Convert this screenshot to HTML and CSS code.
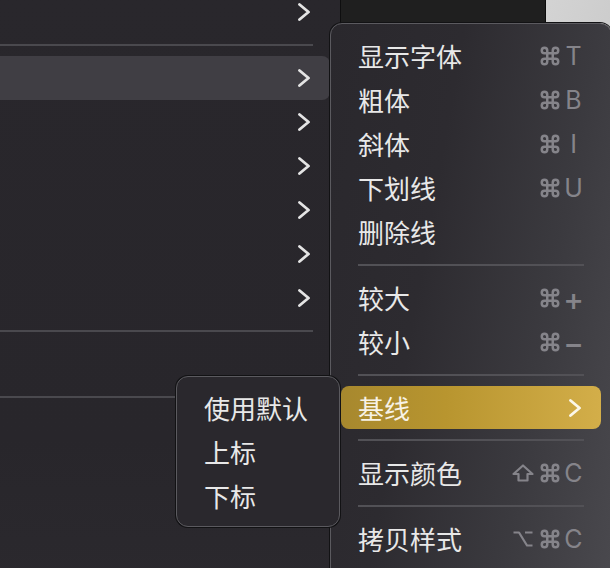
FILE: index.html
```html
<!DOCTYPE html>
<html lang="zh-CN">
<head>
<meta charset="utf-8">
<title>格式菜单</title>
<link rel="stylesheet" href="styles.css">
</head>
<body>
<div class="desktop">
  <div class="backwin"></div>

  <div class="menu menu-main">
    <div class="row"><span class="label"></span><svg class="chev" viewBox="0 0 14 18"><path d="M2.5 1.5 L11.5 9 L2.5 16.5"/></svg></div>
    <div class="sep"></div>
    <div class="row hover"><span class="label"></span><svg class="chev" viewBox="0 0 14 18"><path d="M2.5 1.5 L11.5 9 L2.5 16.5"/></svg></div>
    <div class="row"><span class="label"></span><svg class="chev" viewBox="0 0 14 18"><path d="M2.5 1.5 L11.5 9 L2.5 16.5"/></svg></div>
    <div class="row"><span class="label"></span><svg class="chev" viewBox="0 0 14 18"><path d="M2.5 1.5 L11.5 9 L2.5 16.5"/></svg></div>
    <div class="row"><span class="label"></span><svg class="chev" viewBox="0 0 14 18"><path d="M2.5 1.5 L11.5 9 L2.5 16.5"/></svg></div>
    <div class="row"><span class="label"></span><svg class="chev" viewBox="0 0 14 18"><path d="M2.5 1.5 L11.5 9 L2.5 16.5"/></svg></div>
    <div class="row"><span class="label"></span><svg class="chev" viewBox="0 0 14 18"><path d="M2.5 1.5 L11.5 9 L2.5 16.5"/></svg></div>
    <div class="sep"></div>
    <div class="row"><span class="label"></span></div>
    <div class="sep"></div>
    <div class="row"><span class="label"></span></div>
    <div class="row"><span class="label"></span></div>
    <div class="row"><span class="label"></span></div>
  </div>

  <div class="menu menu-format">
    <div class="row"><span class="label">显示字体</span><span class="keys"><svg class="cmd" viewBox="0 0 24 24"><path d="M18 3a3 3 0 0 0-3 3v12a3 3 0 0 0 3 3 3 3 0 0 0 3-3 3 3 0 0 0-3-3H6a3 3 0 0 0-3 3 3 3 0 0 0 3 3 3 3 0 0 0 3-3V6a3 3 0 0 0-3-3 3 3 0 0 0-3 3 3 3 0 0 0 3 3h12a3 3 0 0 0 3-3 3 3 0 0 0-3-3z"/></svg><span class="key">T</span></span></div>
    <div class="row"><span class="label">粗体</span><span class="keys"><svg class="cmd" viewBox="0 0 24 24"><path d="M18 3a3 3 0 0 0-3 3v12a3 3 0 0 0 3 3 3 3 0 0 0 3-3 3 3 0 0 0-3-3H6a3 3 0 0 0-3 3 3 3 0 0 0 3 3 3 3 0 0 0 3-3V6a3 3 0 0 0-3-3 3 3 0 0 0-3 3 3 3 0 0 0 3 3h12a3 3 0 0 0 3-3 3 3 0 0 0-3-3z"/></svg><span class="key">B</span></span></div>
    <div class="row"><span class="label">斜体</span><span class="keys"><svg class="cmd" viewBox="0 0 24 24"><path d="M18 3a3 3 0 0 0-3 3v12a3 3 0 0 0 3 3 3 3 0 0 0 3-3 3 3 0 0 0-3-3H6a3 3 0 0 0-3 3 3 3 0 0 0 3 3 3 3 0 0 0 3-3V6a3 3 0 0 0-3-3 3 3 0 0 0-3 3 3 3 0 0 0 3 3h12a3 3 0 0 0 3-3 3 3 0 0 0-3-3z"/></svg><span class="key">I</span></span></div>
    <div class="row"><span class="label">下划线</span><span class="keys"><svg class="cmd" viewBox="0 0 24 24"><path d="M18 3a3 3 0 0 0-3 3v12a3 3 0 0 0 3 3 3 3 0 0 0 3-3 3 3 0 0 0-3-3H6a3 3 0 0 0-3 3 3 3 0 0 0 3 3 3 3 0 0 0 3-3V6a3 3 0 0 0-3-3 3 3 0 0 0-3 3 3 3 0 0 0 3 3h12a3 3 0 0 0 3-3 3 3 0 0 0-3-3z"/></svg><span class="key">U</span></span></div>
    <div class="row"><span class="label">删除线</span></div>
    <div class="sep"></div>
    <div class="row"><span class="label">较大</span><span class="keys"><svg class="cmd" viewBox="0 0 24 24"><path d="M18 3a3 3 0 0 0-3 3v12a3 3 0 0 0 3 3 3 3 0 0 0 3-3 3 3 0 0 0-3-3H6a3 3 0 0 0-3 3 3 3 0 0 0 3 3 3 3 0 0 0 3-3V6a3 3 0 0 0-3-3 3 3 0 0 0-3 3 3 3 0 0 0 3 3h12a3 3 0 0 0 3-3 3 3 0 0 0-3-3z"/></svg><span class="key sym">+</span></span></div>
    <div class="row"><span class="label">较小</span><span class="keys"><svg class="cmd" viewBox="0 0 24 24"><path d="M18 3a3 3 0 0 0-3 3v12a3 3 0 0 0 3 3 3 3 0 0 0 3-3 3 3 0 0 0-3-3H6a3 3 0 0 0-3 3 3 3 0 0 0 3 3 3 3 0 0 0 3-3V6a3 3 0 0 0-3-3 3 3 0 0 0-3 3 3 3 0 0 0 3 3h12a3 3 0 0 0 3-3 3 3 0 0 0-3-3z"/></svg><span class="key sym">−</span></span></div>
    <div class="sep"></div>
    <div class="row selected"><span class="label">基线</span><svg class="chev" viewBox="0 0 14 18"><path d="M2.5 1.5 L11.5 9 L2.5 16.5"/></svg></div>
    <div class="sep"></div>
    <div class="row"><span class="label">显示颜色</span><span class="keys"><svg class="modsym" viewBox="0 0 22 18"><path d="M11 1.5 L20.5 10 H15.5 V16.5 H6.5 V10 H1.5 Z"/></svg><svg class="cmd" viewBox="0 0 24 24"><path d="M18 3a3 3 0 0 0-3 3v12a3 3 0 0 0 3 3 3 3 0 0 0 3-3 3 3 0 0 0-3-3H6a3 3 0 0 0-3 3 3 3 0 0 0 3 3 3 3 0 0 0 3-3V6a3 3 0 0 0-3-3 3 3 0 0 0-3 3 3 3 0 0 0 3 3h12a3 3 0 0 0 3-3 3 3 0 0 0-3-3z"/></svg><span class="key">C</span></span></div>
    <div class="sep"></div>
    <div class="row"><span class="label">拷贝样式</span><span class="keys"><svg class="modsym" viewBox="0 0 22 18"><path d="M1.5 2.5 H7 L15 15.5 H20.5 M13 2.5 H20.5"/></svg><svg class="cmd" viewBox="0 0 24 24"><path d="M18 3a3 3 0 0 0-3 3v12a3 3 0 0 0 3 3 3 3 0 0 0 3-3 3 3 0 0 0-3-3H6a3 3 0 0 0-3 3 3 3 0 0 0 3 3 3 3 0 0 0 3-3V6a3 3 0 0 0-3-3 3 3 0 0 0-3 3 3 3 0 0 0 3 3h12a3 3 0 0 0 3-3 3 3 0 0 0-3-3z"/></svg><span class="key">C</span></span></div>
  </div>

  <div class="menu menu-sub">
    <div class="row"><span class="label">使用默认</span></div>
    <div class="row"><span class="label">上标</span></div>
    <div class="row"><span class="label">下标</span></div>
  </div>
</div>
</body>
</html>
```
FILE: styles.css
```css
* { box-sizing: border-box; }
html, body { margin: 0; padding: 0; }
body {
  width: 610px;
  height: 568px;
  overflow: hidden;
  font-family: "Noto Sans CJK SC", "Noto Sans", sans-serif;
}
.desktop {
  position: relative;
  width: 610px;
  height: 568px;
  overflow: hidden;
  background: linear-gradient(110deg, #f2f2f2 0%, #d9d9d9 60%, #b9b9b9 100%);
}
.backwin {
  position: absolute;
  left: 340px;
  top: -10px;
  width: 206px;
  height: 120px;
  background: #1f1f1f;
  border-right: 1px solid #0c0c0c;
}
.menu {
  position: absolute;
  display: flex;
  flex-direction: column;
  color: #e6e6e6;
}
.menu-main {
  left: -200px;
  top: -10px;
  width: 541px;
  height: 600px;
  padding: 0 10px;
  background: linear-gradient(180deg, #29272c 0%, #28262b 75%, #2b292e 100%);
  border-right: 1px solid #0e0e0f;
}
.menu-format {
  left: 330px;
  top: 23px;
  width: 282px;
  height: 580px;
  padding: 10px;
  border-radius: 12px;
  background: linear-gradient(100deg, #2a282d 0%, #2d2b30 35%, #3b3a3f 70%, #4a494e 100%);
  border: 1px solid #5b5a5f;
  box-shadow: 0 0 0 1px #121214;
}
.menu-sub {
  left: 176px;
  top: 376px;
  width: 164px;
  height: 151px;
  padding: 9px 10px 8px;
  border-radius: 12px;
  background: #2a282d;
  border: 1px solid #5b5a5f;
  box-shadow: 0 0 0 1px #121214;
}
.row {
  height: 44px;
  flex: none;
  display: flex;
  align-items: center;
  justify-content: space-between;
  padding: 0 17px;
  border-radius: 8px;
}
.label {
  font-size: 26px;
  line-height: 1;
  color: #e8e8e8;
}
.row.hover {
  background: #403e44;
}
.row.selected {
  height: 43px;
  background: linear-gradient(90deg, #a7882e 0%, #b8952f 40%, #d3ae49 100%);
}
.row.selected .label { color: #f7f2e6; }
.sep {
  flex: none;
  height: 2px;
  margin: 10px 17px;
  background: #4a494e;
}
.menu-format .sep { background: #525156; }
.chev {
  width: 14px;
  height: 18px;
  margin-right: 2px;
  fill: none;
  stroke: #e4e4e4;
  stroke-width: 2.8;
  stroke-linecap: round;
  stroke-linejoin: round;
}
.row.selected .chev { stroke: #fbf7ea; }
.keys {
  display: flex;
  align-items: center;
  color: #85848a;
}
.cmd {
  width: 22px;
  height: 22px;
  margin-right: 2px;
  fill: none;
  stroke: #85848a;
  stroke-width: 2.7;
}
.modsym {
  width: 22px;
  height: 18px;
  margin-right: 5px;
  fill: none;
  stroke: #85848a;
  stroke-width: 2.2;
  stroke-linejoin: round;
  stroke-linecap: butt;
}
.key {
  font-family: "Inter", "Liberation Sans", sans-serif;
  font-size: 25px;
  line-height: 1;
  width: 21px;
  text-align: center;
}
.key.sym {
  font-size: 31px;
  font-weight: 500;
}
```
